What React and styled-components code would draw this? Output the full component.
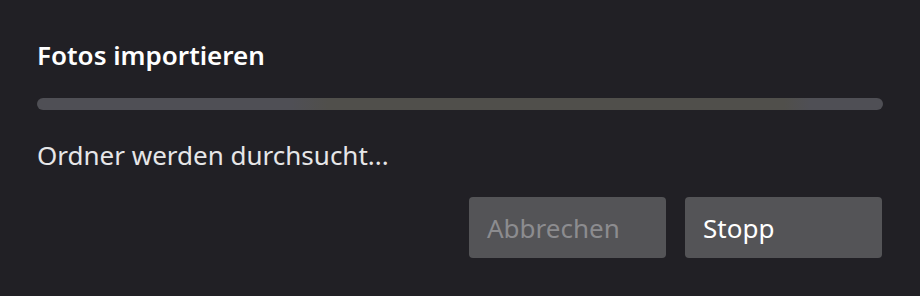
import React from 'react';
import styled, { createGlobalStyle } from 'styled-components';

const Global = createGlobalStyle`
  html, body {
    margin: 0;
    padding: 0;
    background: #212025;
  }
`;

const Dialog = styled.div`
  width: 920px;
  height: 296px;
  box-sizing: border-box;
  padding: 39px 37px 0 37px;
  background: #212025;
  font-family: 'Noto Sans', 'Open Sans', sans-serif;
  display: flex;
  flex-direction: column;
`;

const Title = styled.h1`
  margin: 0;
  font-size: 26px;
  line-height: 32px;
  font-weight: 600;
  color: #ffffff;
`;

const Track = styled.div`
  margin-top: 27px;
  height: 12px;
  border-radius: 6px;
  background: #4f4f55;
  position: relative;
  overflow: hidden;
`;

const Sweep = styled.div`
  position: absolute;
  top: 0;
  bottom: 0;
  left: ${(p) => p.left}px;
  width: ${(p) => p.width}px;
  background: linear-gradient(
    90deg,
    rgba(80, 79, 75, 0) 0%,
    #504f4b 7%,
    #504f4b 95%,
    rgba(80, 79, 75, 0) 100%
  );
`;

const Status = styled.p`
  margin: 28px 0 0 0;
  font-size: 26px;
  line-height: 34px;
  color: #e6e6e8;
`;

const Actions = styled.div`
  margin: 25px 1px 0 0;
  display: flex;
  justify-content: flex-end;
  gap: 19px;
`;

const Button = styled.button`
  width: 197px;
  height: 61px;
  box-sizing: border-box;
  padding: 0 18px;
  border: none;
  border-radius: 4px;
  background: #545457;
  font-family: inherit;
  font-size: 26px;
  text-align: left;
  color: ${(p) => (p.disabled ? '#8c8c8f' : '#ffffff')};
  cursor: ${(p) => (p.disabled ? 'default' : 'pointer')};
`;

export default function App() {
  return (
    <>
      <Global />
      <Dialog>
        <Title>Fotos importieren</Title>
        <Track>
          <Sweep left={255} width={518} />
        </Track>
        <Status>Ordner werden durchsucht...</Status>
        <Actions>
          <Button disabled>Abbrechen</Button>
          <Button>Stopp</Button>
        </Actions>
      </Dialog>
    </>
  );
}
